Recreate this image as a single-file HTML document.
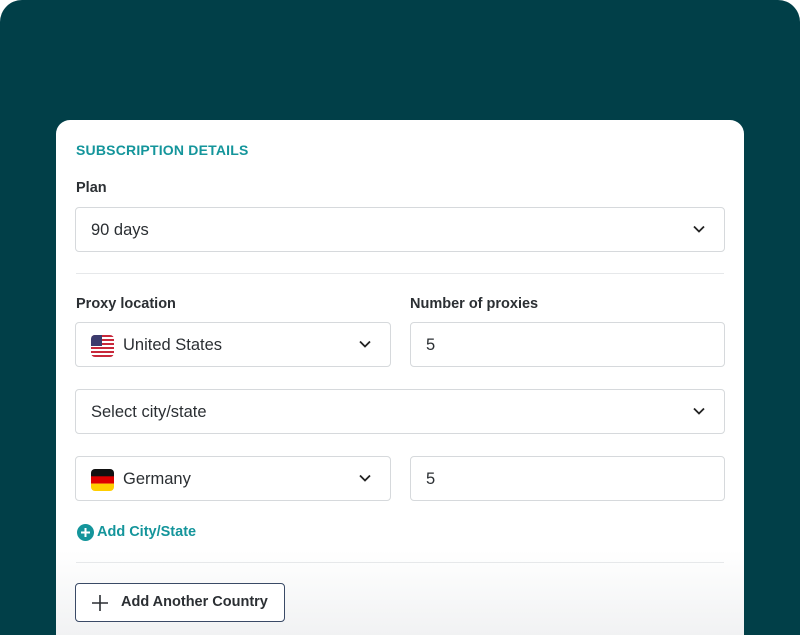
<!DOCTYPE html>
<html><head><meta charset="utf-8"><style>
html,body{margin:0;padding:0;background:#fff;}
#bg{position:absolute;left:0;top:0;width:800px;height:635px;background:#013f48;border-radius:22px 22px 0 0;overflow:hidden;font-family:"Liberation Sans",sans-serif;}
#card{position:absolute;left:56px;top:120px;width:688px;height:540px;border-radius:14px;background:linear-gradient(#fff 0,#fff 430px,#f1f2f3 515px);}
.a{position:absolute;}
.h{left:20px;top:22px;font-size:14px;font-weight:bold;color:#14959b;letter-spacing:0.2px;}
.lbl{font-size:14.5px;font-weight:bold;color:#2b2f33;}
.box{position:absolute;border:1px solid #d6d9dc;border-radius:4px;background:#fff;height:45px;box-sizing:border-box;font-size:16.5px;color:#2b2f33;line-height:44px;padding-left:15px;}
.chev{position:absolute;right:19px;top:17px;}
.hr{position:absolute;left:20px;width:648px;height:1px;background:#e6e8ea;}
.flag{position:absolute;left:15px;top:12px;width:23px;height:22px;border-radius:4px;overflow:hidden;}
</style></head><body>
<div id="bg"><div id="card">
<div class="a h">SUBSCRIPTION DETAILS</div>
<div class="a lbl" style="left:20px;top:60px">Plan</div>
<div class="box" style="left:19px;top:87px;width:650px;">90 days<svg class="chev" width="12" height="8" viewBox="0 0 12 8"><path d="M1 1.5l5 5 5-5" fill="none" stroke="#222" stroke-width="1.8"/></svg></div>
<div class="hr" style="top:153px"></div>
<div class="a lbl" style="left:20px;top:176px">Proxy location</div>
<div class="a lbl" style="left:354px;top:176px">Number of proxies</div>
<div class="box" style="left:19px;top:202px;width:316px;padding-left:47px;">
<svg class="flag" viewBox="0 0 23 22"><rect width="23" height="22" fill="#fff"/><g fill="#c8283a"><rect y="0" width="23" height="2"/><rect y="4" width="23" height="2"/><rect y="8" width="23" height="2"/><rect y="12" width="23" height="2"/><rect y="16" width="23" height="2"/><rect y="20" width="23" height="2"/></g><rect width="11" height="11" fill="#3b3b6d"/></svg>United States<svg class="chev" width="12" height="8" viewBox="0 0 12 8"><path d="M1 1.5l5 5 5-5" fill="none" stroke="#222" stroke-width="1.8"/></svg></div>
<div class="box" style="left:354px;top:202px;width:315px;">5</div>
<div class="box" style="left:19px;top:269px;width:650px;">Select city/state<svg class="chev" width="12" height="8" viewBox="0 0 12 8"><path d="M1 1.5l5 5 5-5" fill="none" stroke="#222" stroke-width="1.8"/></svg></div>
<div class="box" style="left:19px;top:336px;width:316px;padding-left:47px;">
<svg class="flag" viewBox="0 0 23 22"><rect width="23" height="8" fill="#111"/><rect y="7.3" width="23" height="7.4" fill="#dd0000"/><rect y="14.6" width="23" height="7.4" fill="#ffce00"/></svg>Germany<svg class="chev" width="12" height="8" viewBox="0 0 12 8"><path d="M1 1.5l5 5 5-5" fill="none" stroke="#222" stroke-width="1.8"/></svg></div>
<div class="box" style="left:354px;top:336px;width:315px;">5</div>
<svg class="a" style="left:21px;top:404px" width="17" height="17" viewBox="0 0 17 17"><circle cx="8.5" cy="8.5" r="8.5" fill="#14959b"/><path d="M8.5 4v9M4 8.5h9" stroke="#fff" stroke-width="2"/></svg>
<div class="a" style="left:41px;top:404px;font-size:14.5px;font-weight:bold;color:#14959b;">Add City/State</div>
<div class="hr" style="top:442px"></div>
<div class="a" style="left:19px;top:463px;width:210px;height:39px;box-sizing:border-box;border:1.5px solid #3a4a66;border-radius:4px;background:#fff;">
<svg class="a" style="left:16px;top:11px" width="16" height="16" viewBox="0 0 16 16"><path d="M8 0v16M0 8h16" stroke="#2b2f33" stroke-width="1.6"/></svg>
<div class="a" style="left:45px;top:10px;font-size:14.5px;font-weight:bold;color:#2b2f33;white-space:nowrap;">Add Another Country</div>
</div>
</div></div>
</body></html>
